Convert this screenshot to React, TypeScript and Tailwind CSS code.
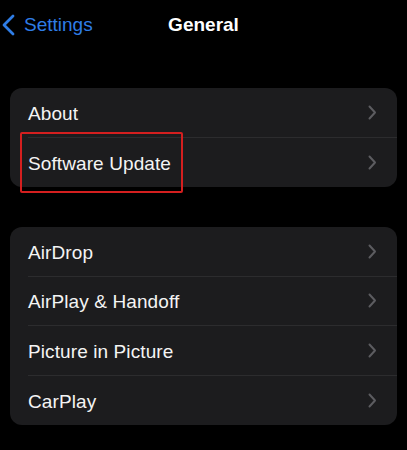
import React from 'react';

const Chevron = () => (
  <svg width="9" height="15" viewBox="0 0 9 15" fill="none" className="shrink-0">
    <path d="M1.5 1.5L7 7.5L1.5 13.5" stroke="#5c5c60" strokeWidth="2" strokeLinecap="round" strokeLinejoin="round" />
  </svg>
);

const BackIcon = () => (
  <svg width="13" height="22" viewBox="0 0 13 22" fill="none">
    <path d="M11 2L2 11L11 20" stroke="#2f7de6" strokeWidth="2.8" strokeLinecap="round" strokeLinejoin="round" />
  </svg>
);

const Row = ({ label, last }: { label: string; last?: boolean }) => (
  <div className="h-[49.5px] pl-[18px] flex">
    <div
      className={`flex-1 flex items-center justify-between pr-[20px] ${
        last ? '' : 'border-b border-[#2c2c2e]'
      }`}
    >
      <span className="pt-[3px] text-[19px] text-[#f4f4f4] tracking-[0.1px]">{label}</span>
      <Chevron />
    </div>
  </div>
);

export default function App() {
  return (
    <div
      className="w-full h-[450px] bg-black overflow-hidden"
      style={{ fontFamily: '"Liberation Sans", Arial, sans-serif' }}
    >
      <div className="h-[50px] grid grid-cols-[1fr_auto_1fr] items-center">
        <div className="flex items-center gap-[9px] pl-[2px]">
          <BackIcon />
          <span className="text-[19px] text-[#2f7de6]">Settings</span>
        </div>
        <span className="text-[19px] font-semibold text-white">General</span>
        <div />
      </div>

      <div className="mx-[10px] mt-[38px] flex flex-col gap-[40px]">
        <div className="relative rounded-[12px] bg-[#1c1c1e]">
          <Row label="About" />
          <Row label="Software Update" last />
          <div className="absolute left-[10px] top-[44px] w-[163px] h-[61px] border-2 border-[#d41f1f] rounded-[2px]" />
        </div>

        <div className="rounded-[12px] bg-[#1c1c1e]">
          <Row label="AirDrop" />
          <Row label="AirPlay & Handoff" />
          <Row label="Picture in Picture" />
          <Row label="CarPlay" last />
        </div>
      </div>
    </div>
  );
}
